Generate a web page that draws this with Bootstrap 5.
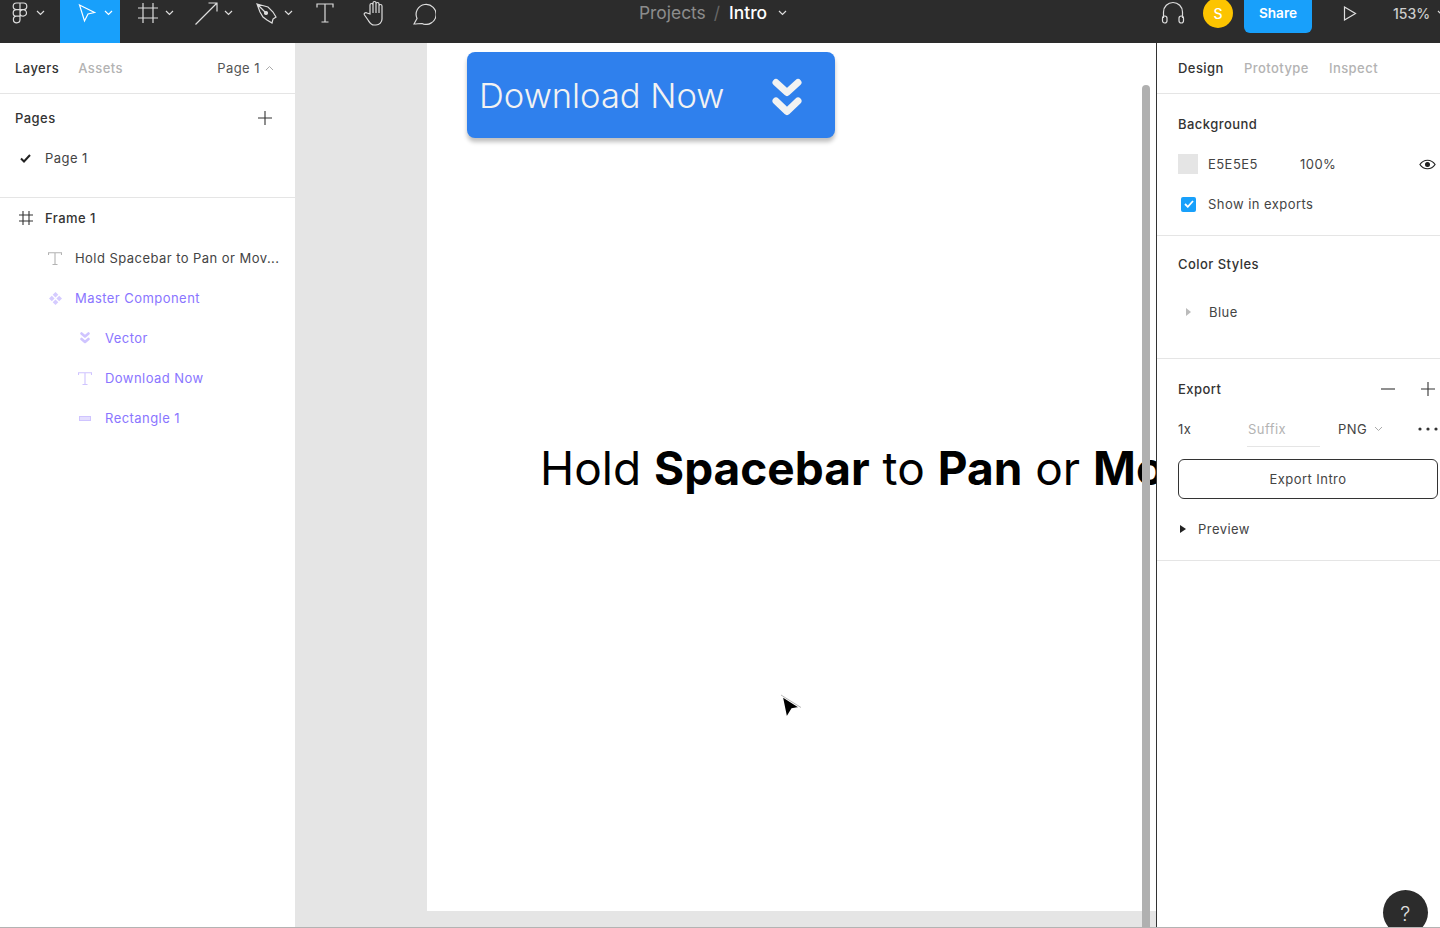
<!DOCTYPE html>
<html lang="en">
<head>
<meta charset="utf-8">
<title>Intro</title>
<link href="https://cdn.jsdelivr.net/npm/bootstrap@5.3.0/dist/css/bootstrap.min.css" rel="stylesheet">
<style>
html,body{height:928px;margin:0;overflow:hidden}
body{font-family:Inter,"Liberation Sans",sans-serif;font-size:13px;color:#333;background:#fff}
.app-shell{height:928px;border-bottom:1px solid #b3b3b3;overflow:hidden}
.top-bar{height:43px;background:#2c2c2c;color:#ddd;flex:none;overflow:hidden}
.tool-slot{height:43px;padding-bottom:17px;flex:none}
.tool-on{background:#18a0fb}
.crumbs{font-size:17.4px;width:500px;height:26px;line-height:26px}
.crumb-dim{color:#8c8c8c}
.crumb-sep{color:#666;margin:0 9px 0 8px}
.crumb-main{color:#fff;font-weight:500;margin-right:11px}
.avatar-dot{width:30px;height:30px;border-radius:50%;background:#fcc400;color:#fff;font-weight:500;font-size:14px;margin-left:18px;flex:none}
.share-btn{width:68px;height:33px;background:#18a0fb;color:#fff;border:0;border-radius:0 0 6px 6px;font-size:13.6px;font-weight:600;padding:0 0 7px;margin-left:11px;align-self:flex-start;flex:none}
.share-btn:hover{background:#18a0fb;color:#fff}
.zoom-val{font-size:14px;font-weight:500;color:#ccc;margin-left:36px}
.left-pane{width:295px;flex:none;background:#fff;letter-spacing:.45px}
.right-pane{width:284px;flex:none;background:#fff;border-left:1px solid #333;position:relative;letter-spacing:.45px}
.tab-head{height:51px;border-bottom:1px solid #e5e5e5;padding-top:2px}
.tab-on{font-weight:500;color:#333}
.tab-off{font-weight:500;color:#b3b3b3}
.row-40{height:40px;padding-top:2px}
.row-40 svg,.tab-head svg{margin-top:-2px}
.strong-t{font-weight:500}
.pane-line{border-bottom:1px solid #e5e5e5}
.purple-t{color:#8a75ff}
.dark-t{color:#444}
.stage{position:relative;background:#e5e5e5;overflow:hidden;padding:0 0 16px 132px}
.art-frame{position:relative;background:#fff;height:100%}
.cta-box{position:absolute;left:40px;top:9px;width:368px;height:86px;background:#2f80ed;border-radius:8px;box-shadow:0 4px 4px rgba(0,0,0,.25);color:#f2f2f2;font-size:34.5px;font-weight:300;padding-left:12px;padding-right:33px;padding-top:1px}
.cta-box svg{margin-top:3px}
.big-copy{position:absolute;left:113px;right:0;top:396px;font-size:46px;line-height:58px;color:#000;white-space:nowrap;overflow:hidden}
.big-copy b{font-weight:700}
.scroll-thumb{position:absolute;left:715px;top:42px;bottom:-16px;width:8px;background:#b0b0b0;border-radius:4px 4px 0 0;z-index:2}
.pointer-mark{position:absolute;left:353px;top:651px;z-index:3}
.sec-a{padding:10px 2px 11px 21px}
.sec-b{padding:8px 2px 26px 21px}
.sec-c{padding:10px 2px 11px 21px}
.swatch-box{width:20px;height:20px;background:#e5e5e5;margin-right:10px;margin-top:-2px}
.check-box{width:15px;height:15px;border-radius:2px;background:#18a0fb;margin:-2px 12px 0 3px}
.check-box svg{margin-top:0}
.suffix-field{width:73px;height:36px;line-height:36px;border-bottom:1px solid #e5e5e5;color:#b3b3b3;margin-left:55px;margin-top:-3px;padding-left:1px}
.export-btn{width:260px;height:40px;border:1px solid #333;border-radius:6px;color:#444;font-size:13px;padding:2px 0 0;background:#fff;margin-top:10px;display:block;letter-spacing:.45px}
.help-dot{position:absolute;left:226px;top:847px;width:45px;height:45px;border-radius:50%;background:#2c2c2c;color:#ddd;font-size:20px;font-weight:300;padding-top:3px}
</style>
</head>
<body>
<div class="app-shell d-flex flex-column">
  <header class="top-bar d-flex">
    <div class="tool-slot d-flex align-items-center" style="width:60px;padding-left:12px">
      <svg width="16" height="24" viewBox="0 0 16 24" fill="none" stroke="#ddd" stroke-width="1.2"><path d="M8 2H4.5a3.2 3.2 0 0 0 0 6.6H8zM8 2h3.5a3.2 3.2 0 0 1 0 6.6H8zM8 8.600H4.500a3.200 3.200 0 0 0 0 6.600H8zM14.500 11.900a3.200 3.200 0 1 1-6.500 0 3.200 3.200 0 0 1 6.500 0zM8 15.200H4.500a3.300 3.300 0 1 0 3.500 3.300z"/></svg>
      <svg class="ms-2" width="9" height="6" viewBox="0 0 9 6" fill="none" stroke="#ddd" stroke-width="1.200"><path d="M1 1l3.500 3.500L8 1"/></svg>
    </div>
    <div class="tool-slot tool-on d-flex align-items-center" style="width:60px;padding-left:18px">
      <svg width="18" height="22" viewBox="0 0 18 22" fill="none" stroke="#fff" stroke-width="1.200"><path d="M1.500 3l15 7.500-6.500 1.500-3.500 7z"/></svg>
      <svg style="margin-left:8px" width="9" height="6" viewBox="0 0 9 6" fill="none" stroke="#fff" stroke-width="1.200"><path d="M1 1l3.500 3.500L8 1"/></svg>
    </div>
    <div class="tool-slot d-flex align-items-center" style="width:60px;padding-left:18px">
      <svg width="20" height="20" viewBox="0 0 20 20" fill="none" stroke="#ddd" stroke-width="1.200"><path d="M5 0v20M15 0v20M0 5h20M0 15h20"/></svg>
      <svg style="margin-left:7px" width="9" height="6" viewBox="0 0 9 6" fill="none" stroke="#ddd" stroke-width="1.200"><path d="M1 1l3.500 3.500L8 1"/></svg>
    </div>
    <div class="tool-slot d-flex align-items-center" style="width:60px;padding-left:15px">
      <svg width="23" height="23" viewBox="0 0 23 23" fill="none" stroke="#ddd" stroke-width="1.200"><path d="M.5 22.500L22 1M13.500 1H22v8.500"/></svg>
      <svg style="margin-left:6px" width="9" height="6" viewBox="0 0 9 6" fill="none" stroke="#ddd" stroke-width="1.200"><path d="M1 1l3.500 3.500L8 1"/></svg>
    </div>
    <div class="tool-slot d-flex align-items-center" style="width:60px;padding-left:16px">
      <svg width="21" height="21" viewBox="0 0 21 21" fill="none" stroke="#ddd" stroke-width="1.200"><path d="M1 1l11 3 5 5 3 5-3 2-1 4-5-3-4-3-3-5zM1 1l8 8"/><circle cx="10" cy="10" r="1.500" fill="#ddd"/></svg>
      <svg style="margin-left:7px" width="9" height="6" viewBox="0 0 9 6" fill="none" stroke="#ddd" stroke-width="1.200"><path d="M1 1l3.500 3.500L8 1"/></svg>
    </div>
    <div class="tool-slot d-flex align-items-center" style="width:40px;padding-left:16px">
      <svg width="18" height="20" viewBox="0 0 18 20" fill="none" stroke="#ddd" stroke-width="1.200"><path d="M1 4.500V1h16v3.500M9 1v18M5.500 19h7"/></svg>
    </div>
    <div class="tool-slot d-flex align-items-center" style="width:50px;padding-left:23px">
      <svg width="24" height="26" viewBox="0 0 24 26" fill="none" stroke="#ddd" stroke-width="1.200"><path d="M7 14V5a1.500 1.500 0 0 1 3 0V3a1.500 1.500 0 0 1 3 0v1a1.500 1.500 0 0 1 3 0v2a1.500 1.500 0 0 1 3 0v13c0 3-2.500 6-6 6h-2c-3 0-4-2-6-5l-3.500-5c-1-1.500 1-3 2.500-2zM10 5v8M13 4v9M16 5v8"/></svg>
    </div>
    <div class="tool-slot d-flex align-items-center" style="width:50px;padding-left:23px">
      <svg width="23" height="23" viewBox="0 0 23 23" fill="none" stroke="#ddd" stroke-width="1.200"><path d="M1 22l3-5.500A10 10 0 1 1 9 21.500c-2.500 0-5.500.5-8 .5z"/></svg>
    </div>
    <div class="crumbs d-flex align-items-center flex-shrink-0" style="margin-left:199px">
      <span class="crumb-dim">Projects</span><span class="crumb-sep">/</span><span class="crumb-main">Intro</span>
      <svg width="9" height="6" viewBox="0 0 9 6" fill="none" stroke="#ddd" stroke-width="1.200"><path d="M1 1l3.500 3.500L8 1"/></svg>
    </div>
    <div class="d-flex align-items-center flex-shrink-0" style="margin-left:22px;height:26px">
      <svg class="flex-shrink-0" width="24" height="24" viewBox="0 0 24 24" fill="none" stroke="#ddd" stroke-width="1.200"><path d="M2.500 17V11a9.500 9.500 0 0 1 19 0v6"/><rect x="1.500" y="15" width="4.500" height="7" rx="2.200"/><rect x="18" y="15" width="4.500" height="7" rx="2.200"/></svg>
      <div class="avatar-dot d-flex align-items-center justify-content-center">S</div>
      <button class="btn share-btn" type="button">Share</button>
      <svg class="flex-shrink-0" style="margin-left:31px" width="14" height="15" viewBox="0 0 14 15" fill="none" stroke="#ddd" stroke-width="1.200"><path d="M1.500 1l11 6.500-11 6.500z"/></svg>
      <span class="zoom-val">153%</span>
      <svg class="flex-shrink-0" style="margin-left:7px" width="9" height="6" viewBox="0 0 9 6" fill="none" stroke="#ddd" stroke-width="1.200"><path d="M1 1l3.500 3.500L8 1"/></svg>
    </div>
  </header>

  <div class="d-flex flex-grow-1" style="min-height:0">
    <aside class="left-pane">
      <div class="tab-head d-flex align-items-center" style="padding-left:15px;padding-right:21px">
        <span class="tab-on">Layers</span><span class="tab-off" style="margin-left:19px">Assets</span>
        <span class="ms-auto" style="color:#555">Page 1</span>
        <svg style="margin-left:5px" width="9" height="6" viewBox="0 0 9 6" fill="none" stroke="#aaa" stroke-width="1"><path d="M1 5l3.500-3.500L8 5"/></svg>
      </div>
      <div class="pane-line" style="padding:4px 0 19px">
        <div class="row-40 d-flex align-items-center justify-content-between" style="padding-left:15px;padding-right:23px">
          <span class="strong-t">Pages</span>
          <svg width="14" height="14" viewBox="0 0 14 14" stroke="#333" stroke-width="1.100"><path d="M7 0v14M0 7h14"/></svg>
        </div>
        <div class="row-40 d-flex align-items-center" style="padding-left:20px">
          <svg style="margin-right:14px" width="11" height="9" viewBox="0 0 11 9" fill="none" stroke="#222" stroke-width="2"><path d="M1 4.500l3 3 6-6.500"/></svg>
          <span class="dark-t">Page 1</span>
        </div>
      </div>
      <div>
        <div class="row-40 d-flex align-items-center" style="padding-left:19px">
          <svg style="margin-right:12px" width="14" height="14" viewBox="0 0 14 14" stroke="#333" stroke-width="1.100"><path d="M4 0v14M10 0v14M0 4h14M0 10h14"/></svg>
          <span class="strong-t">Frame 1</span>
        </div>
        <div class="row-40 d-flex align-items-center" style="padding-left:48px">
          <svg style="margin-right:13px" width="14" height="13" viewBox="0 0 14 13" fill="none" stroke="#b3b3b3" stroke-width="1.100"><path d="M.5 3V.7h13V3M7 .7v11.800M4.500 12.500h5"/></svg>
          <span class="dark-t">Hold Spacebar to Pan or Mov...</span>
        </div>
        <div class="row-40 d-flex align-items-center" style="padding-left:49px">
          <svg style="margin-right:13px" width="13" height="13" viewBox="0 0 13 13" fill="#d5cbff"><path d="M6.500 0l2.800 2.800-2.800 2.800-2.800-2.800zM2.800 3.700l2.800 2.800-2.800 2.800L0 6.500zM10.200 3.700L13 6.500l-2.800 2.800-2.800-2.800zM6.500 7.400l2.800 2.800L6.500 13l-2.800-2.800z"/></svg>
          <span class="purple-t">Master Component</span>
        </div>
        <div class="row-40 d-flex align-items-center" style="padding-left:80px">
          <svg style="margin-right:15px" width="10" height="12" viewBox="0 0 10 12" fill="none" stroke="#cfc4ff" stroke-width="2.600" stroke-linecap="round" stroke-linejoin="round"><path d="M1.500 1.500L5 4.500l3.500-3M1.500 7L5 10l3.500-3"/></svg>
          <span class="purple-t">Vector</span>
        </div>
        <div class="row-40 d-flex align-items-center" style="padding-left:78px">
          <svg style="margin-right:13px" width="14" height="13" viewBox="0 0 14 13" fill="none" stroke="#cfc4ff" stroke-width="1.100"><path d="M.5 3V.7h13V3M7 .7v11.800M4.500 12.500h5"/></svg>
          <span class="purple-t">Download Now</span>
        </div>
        <div class="row-40 d-flex align-items-center" style="padding-left:79px">
          <svg style="margin-right:14px" width="12" height="5" viewBox="0 0 12 5" fill="#e4deff" stroke="#cfc4ff"><rect x=".5" y=".5" width="11" height="4"/></svg>
          <span class="purple-t">Rectangle 1</span>
        </div>
      </div>
    </aside>

    <main class="stage flex-grow-1">
      <div class="art-frame">
        <div class="cta-box d-flex align-items-center justify-content-between">
          <span>Download Now</span>
          <svg width="30" height="38" viewBox="0 0 30 38" fill="none" stroke="#f2f2f2" stroke-width="7" stroke-linecap="round" stroke-linejoin="round"><path d="M4 4.500L15 14.500 26 4.500M4 23L15 33.500 26 23"/></svg>
        </div>
        <div class="big-copy">Hold <b>Spacebar</b> to <b>Pan</b> or <b>Move</b></div>
        <div class="scroll-thumb"></div>
        <svg class="pointer-mark" width="22" height="26" viewBox="0 0 22 26"><path d="M2 2l18 11.500-8 1.500-5.500 9z" fill="#000" stroke="#fff" stroke-width="1.500"/><path d="M1 1l20 12.500" stroke="#888" stroke-width=".6" fill="none"/></svg>
      </div>
    </main>

    <aside class="right-pane">
      <div class="tab-head d-flex align-items-center" style="padding-left:21px">
        <span class="tab-on">Design</span><span class="tab-off" style="margin-left:20px">Prototype</span><span class="tab-off" style="margin-left:20px">Inspect</span>
      </div>
      <section class="sec-a pane-line">
        <div class="row-40 d-flex align-items-center strong-t">Background</div>
        <div class="row-40 d-flex align-items-center dark-t">
          <span class="swatch-box"></span><span style="width:92px">E5E5E5</span><span>100%</span>
          <svg class="ms-auto" style="margin-right:2px" width="17" height="11" viewBox="0 0 18 11" fill="none" stroke="#222" stroke-width="1.300"><path d="M1 5.500C3 2.500 5.800 1 9 1s6 1.500 8 4.500C15 8.500 12.200 10 9 10S3 8.500 1 5.500z"/><circle cx="9" cy="5.500" r="2" fill="#222"/></svg>
        </div>
        <div class="row-40 d-flex align-items-center dark-t">
          <span class="check-box d-flex align-items-center justify-content-center">
            <svg width="10" height="8" viewBox="0 0 10 8" fill="none" stroke="#fff" stroke-width="1.800"><path d="M1 4l2.800 2.800L9 1"/></svg>
          </span>Show in exports
        </div>
      </section>
      <section class="sec-b pane-line">
        <div class="row-40 d-flex align-items-center strong-t">Color Styles</div>
        <div class="row-40 d-flex align-items-center dark-t" style="margin-top:8px;padding-left:8px">
          <svg style="margin-right:18px" width="5" height="8" viewBox="0 0 5 8" fill="#bbb"><path d="M0 0l5 4-5 4z"/></svg>Blue
        </div>
      </section>
      <section class="sec-c pane-line">
        <div class="row-40 d-flex align-items-center strong-t">
          Export
          <svg class="ms-auto" width="14" height="2" viewBox="0 0 14 2" stroke="#333" stroke-width="1.100"><path d="M0 1h14"/></svg>
          <svg style="margin-left:26px;margin-right:3px" width="14" height="14" viewBox="0 0 14 14" stroke="#333" stroke-width="1.100"><path d="M7 0v14M0 7h14"/></svg>
        </div>
        <div class="row-40 d-flex align-items-center dark-t">
          <span style="width:14px">1x</span>
          <span class="suffix-field">Suffix</span>
          <span style="margin-left:18px">PNG</span>
          <svg style="margin-left:7px" width="9" height="6" viewBox="0 0 9 6" fill="none" stroke="#aaa" stroke-width="1"><path d="M1 1l3.500 3.500L8 1"/></svg>
          <svg class="ms-auto" width="20" height="4" viewBox="0 0 20 4" fill="#333"><circle cx="2" cy="2" r="1.600"/><circle cx="10" cy="2" r="1.600"/><circle cx="18" cy="2" r="1.600"/></svg>
        </div>
        <button class="btn export-btn" type="button">Export Intro</button>
        <div class="row-40 d-flex align-items-center dark-t" style="margin-top:10px">
          <svg style="margin-left:2px;margin-right:12px" width="6" height="8" viewBox="0 0 6 8" fill="#222"><path d="M0 0l6 4-6 4z"/></svg>Preview
        </div>
      </section>
      <div class="help-dot d-flex align-items-center justify-content-center">?</div>
    </aside>
  </div>
</div>
</body>
</html>
